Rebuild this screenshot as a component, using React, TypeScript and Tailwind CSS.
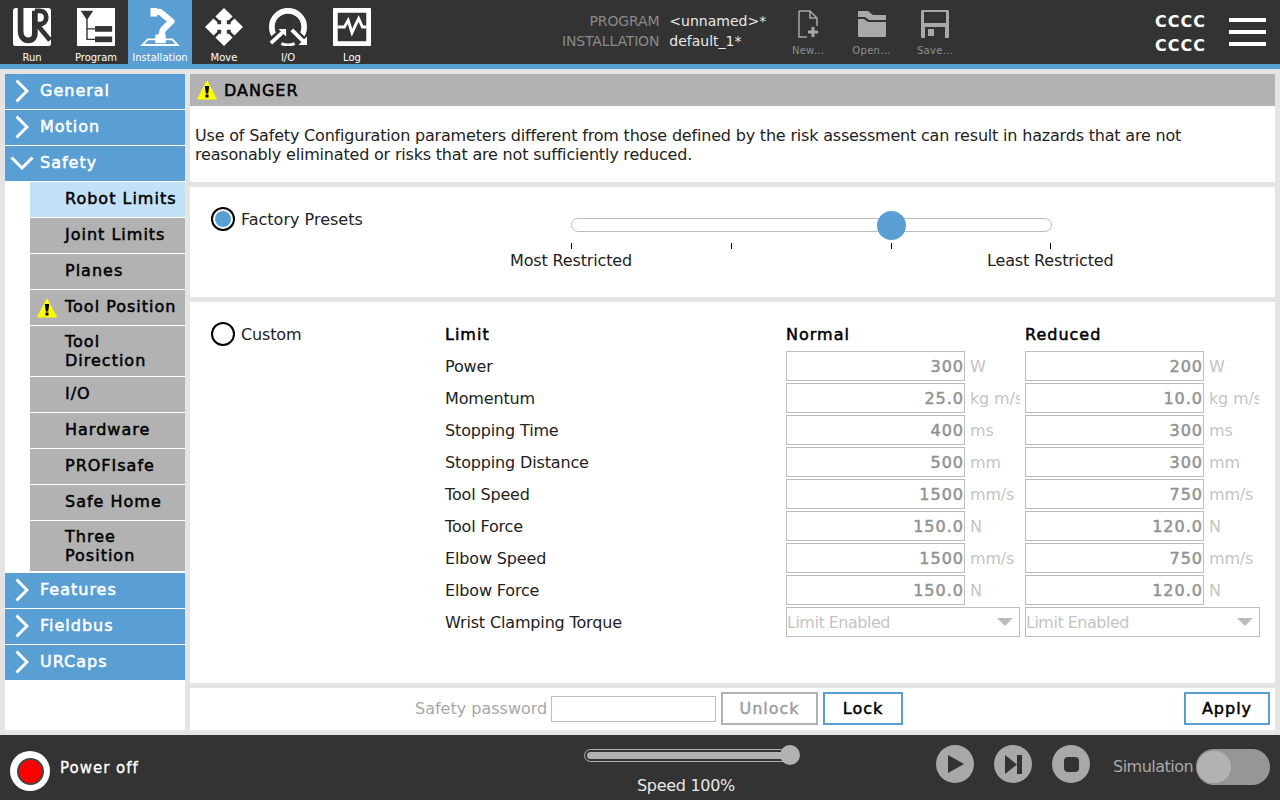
const strong = 'tracking-[1px] [-webkit-text-stroke:0.5px]';

const tabs = [
  { label: 'Run', icon: <RunIcon /> },
  { label: 'Program', icon: <ProgramIcon /> },
  { label: 'Installation', icon: <RobotIcon />, active: true },
  { label: 'Move', icon: <MoveIcon /> },
  { label: 'I/O', icon: <IoIcon /> },
  { label: 'Log', icon: <LogIcon /> },
];

const limits = [
  { name: 'Power', normal: '300', reduced: '200', unit: 'W' },
  { name: 'Momentum', normal: '25.0', reduced: '10.0', unit: 'kg m/s' },
  { name: 'Stopping Time', normal: '400', reduced: '300', unit: 'ms' },
  { name: 'Stopping Distance', normal: '500', reduced: '300', unit: 'mm' },
  { name: 'Tool Speed', normal: '1500', reduced: '750', unit: 'mm/s' },
  { name: 'Tool Force', normal: '150.0', reduced: '120.0', unit: 'N' },
  { name: 'Elbow Speed', normal: '1500', reduced: '750', unit: 'mm/s' },
  { name: 'Elbow Force', normal: '150.0', reduced: '120.0', unit: 'N' },
];

function RunIcon() {
  return (
    <svg width="40" height="40" viewBox="0 0 40 40" fill="none">
      <rect width="40" height="40" rx="3" fill="#fff" />
      <path d="M8 0V24C8 31 12 34 16 34C21 34 23 31 23 27V3" stroke="#333" strokeWidth="6" />
      <path d="M23 3H28C33 3 35 7 35 10C35 14 32 17 28 17H25L39 34" stroke="#333" strokeWidth="5" />
    </svg>
  );
}

function ProgramIcon() {
  return (
    <svg width="40" height="40" viewBox="0 0 40 40">
      <rect width="40" height="40" fill="#fff" />
      <path d="M4 3H17L10.500 13Z" fill="#333" />
      <path d="M10.500 12V33H19M10.500 22H19" fill="none" stroke="#333" strokeWidth="1.500" />
      <rect x="19" y="19" width="18" height="6" fill="#333" />
      <rect x="19" y="30" width="18" height="6" fill="#333" />
    </svg>
  );
}

function RobotIcon() {
  return (
    <svg width="40" height="40" viewBox="0 0 40 40" fill="none">
      <path d="M1.500 39L7 33H33L38.500 39Z" stroke="#fff" strokeWidth="2" />
      <path d="M13 4H20L32 14L23 23L20 34" stroke="#fff" strokeWidth="6.500" strokeLinejoin="round" />
      <rect x="10" y="0" width="7" height="9" fill="#fff" />
      <rect x="15" y="28" width="11" height="9" fill="#fff" />
    </svg>
  );
}

function MoveIcon() {
  return (
    <svg width="40" height="40" viewBox="0 0 40 40">
      <path
        d="M20 0L29 9L25 13H23V17H27V15L31 11L40 20L31 29L27 25V23H23V27H25L29 31L20 40L11 31L15 27H17V23H13V25L9 29L0 20L9 11L13 15V17H17V13H15L11 9Z"
        fill="#fff"
      />
    </svg>
  );
}

function IoIcon() {
  return (
    <svg width="40" height="40" viewBox="0 0 40 40" fill="none">
      <path d="M8 32A17 17 0 1 1 32 32" stroke="#fff" strokeWidth="6" />
      <path d="M13 37.500A18 18 0 0 0 27 37.500" stroke="#fff" strokeWidth="3" />
      <path d="M0 38L17 23M23 22L39 38" stroke="#333" strokeWidth="9" />
      <path d="M2 37L16 24" stroke="#fff" strokeWidth="4" />
      <path d="M10 22H18V30Z" fill="#fff" />
      <path d="M24 23L37 36" stroke="#fff" strokeWidth="4" />
      <path d="M31 39H40V30Z" fill="#fff" />
    </svg>
  );
}

function LogIcon() {
  return (
    <svg width="40" height="40" viewBox="0 0 40 40">
      <rect width="40" height="40" rx="1" fill="#fff" />
      <rect x="5" y="5" width="30" height="30" fill="#333" />
      <path d="M5 20H12L16 13L20 26L27 11L31 20H35" fill="none" stroke="#fff" strokeWidth="3" />
    </svg>
  );
}

function FileIcon({ kind }: { kind: 'new' | 'open' | 'save' }) {
  if (kind === 'new') {
    return (
      <svg width="20" height="28" viewBox="0 0 20 28" fill="none">
        <path d="M1 1H12L19 8V16M9 27H1V1M12 1V8H19" stroke="#a8a8a8" strokeWidth="1.500" />
        <path d="M15 17V27M10 22H20" stroke="#a8a8a8" strokeWidth="3" />
      </svg>
    );
  }
  if (kind === 'open') {
    return (
      <svg width="28" height="28" viewBox="0 0 28 28">
        <path d="M0 1H10L15 5H28V10H11L7 7H0Z" fill="#a8a8a8" />
        <path d="M0 9H6L10 12H28V26L27 27H1L0 26Z" fill="#a8a8a8" />
      </svg>
    );
  }
  return (
    <svg width="28" height="28" viewBox="0 0 28 28">
      <path d="M1 0H27L28 1V27L27 28H1L0 27V1Z" fill="#a8a8a8" />
      <rect x="3" y="2" width="22" height="11" fill="#333" />
      <rect x="4" y="17" width="20" height="11" fill="#333" />
      <rect x="7" y="19" width="6" height="7" fill="#a8a8a8" />
    </svg>
  );
}

function WarnIcon() {
  return (
    <svg width="20" height="20" viewBox="0 0 20 20">
      <path d="M10 1L19.500 19H0.500Z" fill="#ffff00" stroke="#ffff00" strokeLinejoin="round" />
      <path d="M7.800 6H12.200L11.200 13.500H8.800Z" fill="#000" />
      <rect x="8.500" y="14.500" width="3" height="3" fill="#000" />
    </svg>
  );
}

function Chevron({ open }: { open?: boolean }) {
  if (open) {
    return (
      <svg width="24" height="14" viewBox="0 0 24 14" fill="none">
        <path d="M1.500 1.500L12 12L22.500 1.500" stroke="#fff" strokeWidth="3" />
      </svg>
    );
  }
  return (
    <svg width="14" height="24" viewBox="0 0 14 24" fill="none">
      <path d="M1.500 1.500L12 12L1.500 22.500" stroke="#fff" strokeWidth="3" />
    </svg>
  );
}

function NavHeader({ label, open }: { label: string; open?: boolean }) {
  return (
    <div className="flex h-[35px] items-center bg-[#5a9fd4] text-white">
      <div className="flex w-[35px] justify-center pr-[2px] pb-[2px]">
        <Chevron open={open} />
      </div>
      <span className={`pb-[2px] ${strong}`}>{label}</span>
    </div>
  );
}

function NavItem({ label, active, warn, tall }: { label: string; active?: boolean; warn?: boolean; tall?: boolean }) {
  return (
    <div
      className={`relative flex items-center pl-[35px] leading-[19px] text-black ${tall ? 'h-[50px]' : 'h-[35px] pb-[2px]'} ${active ? 'bg-[#c2e0f6]' : 'bg-[#b2b2b2]'}`}
    >
      {warn && (
        <div className="absolute top-2 left-[7px]">
          <WarnIcon />
        </div>
      )}
      <span className={`w-[120px] ${strong}`}>{label}</span>
    </div>
  );
}

function LimitInput({ value, unit }: { value: string; unit: string }) {
  return (
    <div className="flex h-[30px]">
      <div className={`h-[30px] w-[179px] border border-[#bdbdbd] bg-white text-right leading-[29px] text-[#929292] ${strong}`}>
        {value}
      </div>
      <div className="ml-[5px] h-[30px] w-[50px] overflow-hidden leading-[32px] whitespace-nowrap text-[#c4c4c4]">{unit}</div>
    </div>
  );
}

function LimitSelect() {
  return (
    <div className="flex h-[30px] items-center justify-between border border-[#bdbdbd] pr-[6px] text-[#c4c4c4]">
      <span className="pt-[2px] tracking-[-0.5px]">Limit Enabled</span>
      <span className="h-0 w-0 border-x-[8px] border-t-[8px] border-x-transparent border-t-[#bdbdbd]" />
    </div>
  );
}

function Radio({ checked }: { checked?: boolean }) {
  return (
    <div className="flex h-6 w-6 items-center justify-center rounded-full border-2 border-black bg-white">
      {checked && <div className="h-4 w-4 rounded-full bg-[#5a9fd4]" />}
    </div>
  );
}

export default function App() {
  return (
    <div className="flex h-[800px] w-[1280px] flex-col overflow-hidden bg-[#e4e4e4] font-['DejaVu_Sans',sans-serif] text-base tracking-[-0.15px] text-[#222222]">
      {/* top bar */}
      <header className="flex h-[69px] shrink-0 border-b-[5px] border-[#5a9fd4] bg-[#333333]">
        <div className="flex">
          {tabs.map((tab) => (
            <div
              key={tab.label}
              className={`flex w-16 flex-col items-center pt-2 text-white ${tab.active ? 'bg-[#5a9fd4]' : ''}`}
            >
              {tab.icon}
              <span className="mt-[5px] text-[10px] leading-[13px] tracking-normal">{tab.label}</span>
            </div>
          ))}
        </div>
        <div className="ml-[178px] grid w-[205px] grid-cols-[auto_1fr] content-start gap-x-[10px] pt-[11px] text-sm leading-[20px]">
          <span className="text-right text-[#8a8a8a]">PROGRAM</span>
          <span className="tracking-normal text-[#e8e8e8]">&lt;unnamed&gt;*</span>
          <span className="text-right text-[#8a8a8a]">INSTALLATION</span>
          <span className="tracking-normal text-[#e8e8e8]">default_1*</span>
        </div>
        <div className="ml-[9px] flex pt-[10px]">
          {(
            [
              ['new', 'New...', 'w-[64px]'],
              ['open', 'Open...', 'w-[63px]'],
              ['save', 'Save...', 'w-[64px]'],
            ] as const
          ).map(([kind, label, width]) => (
            <div key={kind} className={`flex flex-col items-center ${width}`}>
              <FileIcon kind={kind} />
              <span className="mt-[6px] text-[10px] leading-[13px] tracking-[0.3px] text-[#8f8f8f]">{label}</span>
            </div>
          ))}
        </div>
        <div className="ml-auto flex">
          <div className="mr-[23px] flex flex-col pt-[10px] text-base leading-[24px] font-bold tracking-[1px] text-white">
            <span>CCCC</span>
            <span>CCCC</span>
          </div>
          <div className="mr-[14px] flex w-[37px] flex-col gap-[8px] pt-[18px]">
            <div className="h-1 bg-white" />
            <div className="h-1 bg-white" />
            <div className="h-1 bg-white" />
          </div>
        </div>
      </header>

      {/* main area */}
      <div className="flex min-h-0 flex-1 gap-[5px] p-[5px]">
        <nav className="flex w-[180px] shrink-0 flex-col gap-px bg-white">
          <NavHeader label="General" />
          <NavHeader label="Motion" />
          <NavHeader label="Safety" open />
          <div className="mb-px ml-[25px] flex flex-col gap-px">
            <NavItem label="Robot Limits" active />
            <NavItem label="Joint Limits" />
            <NavItem label="Planes" />
            <NavItem label="Tool Position" warn />
            <NavItem label="Tool Direction" tall />
            <NavItem label="I/O" />
            <NavItem label="Hardware" />
            <NavItem label="PROFIsafe" />
            <NavItem label="Safe Home" />
            <NavItem label="Three Position" tall />
          </div>
          <NavHeader label="Features" />
          <NavHeader label="Fieldbus" />
          <NavHeader label="URCaps" />
        </nav>

        <div className="flex min-w-0 flex-1 flex-col gap-[5px]">
          <section className="h-[108px] shrink-0 bg-white">
            <div className="flex h-8 items-center gap-[7px] bg-[#b2b2b2] pl-[7px]">
              <WarnIcon />
              <span className={`pt-[2px] text-black ${strong}`}>DANGER</span>
            </div>
            <p className="mt-5 pl-[5px] leading-[19px] tracking-[-0.19px]">
              Use of Safety Configuration parameters different from those defined by the risk assessment can result in hazards that are not
              <br />
              reasonably eliminated or risks that are not sufficiently reduced.
            </p>
          </section>

          <section className="flex h-[110px] shrink-0 bg-white">
            <div className="flex w-[320px] items-start gap-[6px] pt-5 pl-[21px]">
              <Radio checked />
              <span className="leading-[26px] tracking-normal">Factory Presets</span>
            </div>
            <div className="relative w-[700px]">
              <div className="absolute top-[31px] left-[61px] h-[14px] w-[481px] rounded-full border border-[#bdbdbd]" />
              <div className="absolute top-[24px] left-[367px] h-[29px] w-[29px] rounded-full bg-[#5a9fd4]" />
              <div className="absolute top-[56px] left-[61px] h-[6px] w-px bg-black" />
              <div className="absolute top-[56px] left-[221px] h-[6px] w-px bg-black" />
              <div className="absolute top-[56px] left-[381px] h-[6px] w-px bg-black" />
              <div className="absolute top-[56px] left-[540px] h-[6px] w-px bg-black" />
              <span className="absolute top-[63px] left-0 leading-[21px]">Most Restricted</span>
              <span className="absolute top-[63px] left-[477px] leading-[21px]">Least Restricted</span>
            </div>
          </section>

          <section className="flex h-[381px] shrink-0 bg-white">
            <div className="flex w-[255px] items-start gap-[6px] pt-5 pl-[21px]">
              <Radio />
              <span className="leading-[26px]">Custom</span>
            </div>
            <div className="grid grid-cols-[336px_234px_235px] content-start gap-x-[5px] gap-y-[2px] pt-[17px]">
              <span className={`h-[30px] leading-[32px] text-black ${strong}`}>Limit</span>
              <span className={`h-[30px] leading-[32px] text-black ${strong}`}>Normal</span>
              <span className={`h-[30px] leading-[32px] text-black ${strong}`}>Reduced</span>
              {limits.map((row) => (
                <div key={row.name} className="contents">
                  <span className="h-[30px] leading-[32px]">{row.name}</span>
                  <LimitInput value={row.normal} unit={row.unit} />
                  <LimitInput value={row.reduced} unit={row.unit} />
                </div>
              ))}
              <span className="h-[30px] leading-[32px]">Wrist Clamping Torque</span>
              <LimitSelect />
              <LimitSelect />
            </div>
          </section>

          <section className="flex h-[42px] shrink-0 items-center bg-white pb-px">
            <span className="ml-[225px] w-[131px] whitespace-nowrap pt-px tracking-normal text-[#a8a8a8]">Safety password</span>
            <div className="ml-[5px] h-[26px] w-[165px] border border-[#bdbdbd]" />
            <div className={`ml-[5px] flex h-[33px] w-[97px] items-center justify-center border-2 border-[#b2b2b2] pt-px text-[#a0a0a0] ${strong}`}>
              Unlock
            </div>
            <div className={`ml-[5px] flex h-[33px] w-[80px] items-center justify-center border-2 border-[#5a9fd4] pt-px text-black ${strong}`}>
              Lock
            </div>
            <div className={`mr-[5px] ml-auto flex h-[33px] w-[86px] items-center justify-center border-2 border-[#5a9fd4] pt-px text-black ${strong}`}>
              Apply
            </div>
          </section>
        </div>
      </div>

      {/* bottom bar */}
      <footer className="relative flex h-[65px] shrink-0 items-center bg-[#333333] text-white">
        <div className="mt-[7px] ml-[10px] flex h-10 w-10 items-center justify-center rounded-full bg-white">
          <div className="flex h-[27px] w-[27px] items-center justify-center rounded-full bg-[#444444]">
            <div className="h-[23px] w-[23px] rounded-full bg-[#ff0000]" />
          </div>
        </div>
        <span className="mt-[2px] ml-[10px] text-[15px] tracking-[1px] [-webkit-text-stroke:0.3px]">Power off</span>
        <div className="absolute top-[14px] left-[584px] h-[13px] w-[206px] rounded-full border border-[#b2b2b2] p-[2px]">
          <div className="h-full rounded-full bg-[#b2b2b2]" />
        </div>
        <div className="absolute top-[10px] left-[780px] h-5 w-5 rounded-full bg-[#b2b2b2]" />
        <span className="absolute top-[40px] left-[637px] leading-[21px] tracking-[-0.3px] text-[#e8e8e8]">Speed 100%</span>
        <div className="absolute top-[10px] left-[936px] flex gap-[20px]">
          <div className="flex h-[38px] w-[38px] items-center justify-center rounded-full bg-[#a8a8a8]">
            <svg width="16" height="18" viewBox="0 0 16 18" className="ml-[2px]">
              <path d="M0 0L16 9L0 18Z" fill="#333" />
            </svg>
          </div>
          <div className="flex h-[38px] w-[38px] items-center justify-center rounded-full bg-[#a8a8a8]">
            <svg width="17" height="19" viewBox="0 0 17 19">
              <path d="M0 0L12 9.500L0 19Z" fill="#333" />
              <rect x="12" y="0" width="5" height="19" fill="#333" />
            </svg>
          </div>
          <div className="flex h-[38px] w-[38px] items-center justify-center rounded-full bg-[#a8a8a8]">
            <div className="h-[15px] w-[15px] rounded-sm bg-[#333]" />
          </div>
        </div>
        <span className="absolute top-[21px] left-[1113px] leading-[21px] tracking-[-0.5px] text-[#a8a8a8]">Simulation</span>
        <div className="absolute top-[14px] left-[1196px] h-[36px] w-[74px] rounded-full bg-[#969696]">
          <div className="mt-[2px] ml-[1px] h-8 w-[34px] rounded-full bg-[#b2b2b2]" />
        </div>
      </footer>
    </div>
  );
}
